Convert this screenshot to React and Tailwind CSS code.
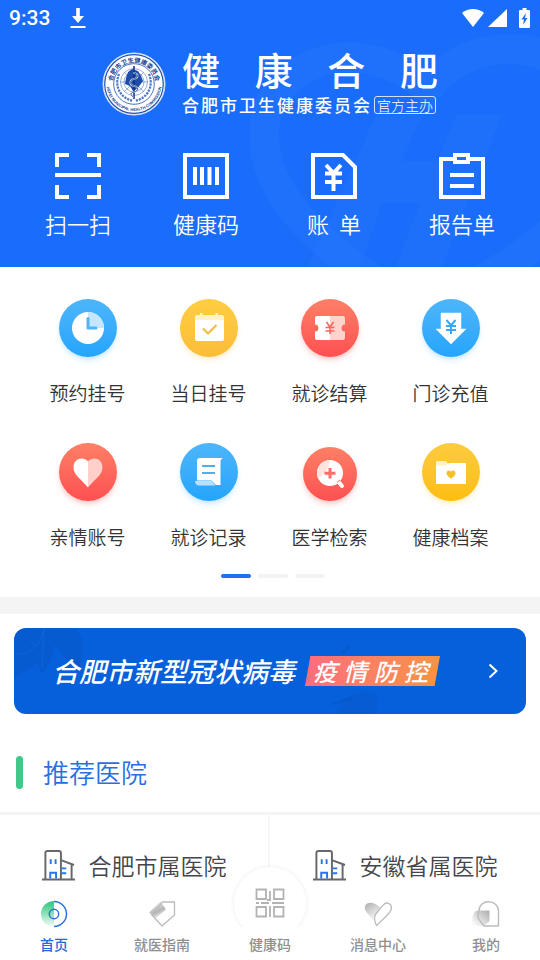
import { useState } from "react";

const quickActions = [
  { label: "扫一扫", icon: ScanIcon },
  { label: "健康码", icon: BarcodeIcon },
  { label: "账\u00a0\u00a0单", icon: BillIcon },
  { label: "报告单", icon: ReportIcon },
];

const services = [
  { label: "预约挂号", icon: ClockGlyph, tone: "blue" },
  { label: "当日挂号", icon: CalendarGlyph, tone: "yellow" },
  { label: "就诊结算", icon: TicketGlyph, tone: "red" },
  { label: "门诊充值", icon: TopUpGlyph, tone: "blue" },
  { label: "亲情账号", icon: HeartGlyph, tone: "red" },
  { label: "就诊记录", icon: RecordGlyph, tone: "blue" },
  { label: "医学检索", icon: SearchGlyph, tone: "red", small: true },
  { label: "健康档案", icon: FolderGlyph, tone: "gold" },
];

const tones = {
  blue: "from-[#4db5fb] to-[#23a5fc] shadow-[#23a5fc]/20",
  yellow: "from-[#ffcd42] to-[#fbbd38] shadow-[#fbbd38]/20",
  red: "from-[#fd7f66] to-[#fd4f51] shadow-[#fd4f51]/25",
  gold: "from-[#fdcb3e] to-[#fdbe0c] shadow-[#fdbe0c]/20",
};

const tabs = [
  { id: "home", label: "首页", icon: HomeTabIcon },
  { id: "guide", label: "就医指南", icon: GuideTabIcon },
  { id: "code", label: "健康码", icon: CodeTabIcon, raised: true },
  { id: "news", label: "消息中心", icon: NewsTabIcon },
  { id: "me", label: "我的", icon: MeTabIcon },
];

/* ---------- header icons ---------- */

function ScanIcon() {
  return (
    <svg className="size-[46px]" viewBox="0 0 46 46" fill="none" stroke="#fff" strokeWidth="4">
      <path d="M2 14V2h12M32 2h12v12M2 32v12h12M32 44h12V32" />
      <path d="M0 22h46" />
    </svg>
  );
}

function BarcodeIcon() {
  return (
    <svg className="size-[46px]" viewBox="0 0 46 46" fill="none" stroke="#fff" strokeWidth="4">
      <path d="M2 2h42v42H2z" />
      <path d="M12 14v18M19 14v18M26.500 14v18M34 14v18" />
    </svg>
  );
}

function BillIcon() {
  return (
    <svg className="size-[46px]" viewBox="0 0 46 46" fill="none" stroke="#fff" strokeWidth="4">
      <path d="M2 2h30l12 12v30H2z" />
      <path d="M15 12l7.500 8L30 12M14 20.500h17M14 29h17M22.500 20v18" />
    </svg>
  );
}

function ReportIcon() {
  return (
    <svg className="size-[46px]" viewBox="0 0 46 46" fill="none" stroke="#fff" strokeWidth="4">
      <path d="M15 6H2v38h42V6H30" />
      <path d="M16 2h13v7H16zM11 22h24M11 33h24" />
    </svg>
  );
}

/* ---------- service glyphs ---------- */

function ClockGlyph() {
  return (
    <svg className="size-[34px]" viewBox="0 0 34 34">
      <circle cx="17" cy="17" r="16" fill="#fff" />
      <path d="M17 1a16 16 0 0 1 16 16H17z" fill="#c4e6fe" />
      <path d="M17 7.500V17h8" fill="none" stroke="#4fb4f8" strokeWidth="3" strokeLinecap="round" strokeLinejoin="round" />
    </svg>
  );
}

function CalendarGlyph() {
  return (
    <svg className="size-[34px]" viewBox="0 0 34 34">
      <path d="M3 6a2 2 0 0 1 2-2h3V2h2.500v2h13V2H26v2h4a2 2 0 0 1 2 2v4H3z" fill="#fff2c4" />
      <path d="M3 9h29v19a2 2 0 0 1-2 2H5a2 2 0 0 1-2-2z" fill="#fff" />
      <path d="M11 17.500l5 5 8.500-8.500" fill="none" stroke="#f0bd45" strokeWidth="2.200" />
    </svg>
  );
}

function TicketGlyph() {
  return (
    <svg className="size-[34px]" viewBox="0 0 34 34">
      <path d="M4 5h13v24H4a2 2 0 0 1-2-2v-6.500a3.500 3.500 0 0 0 0-7V7a2 2 0 0 1 2-2z" fill="#fff" />
      <path d="M17 5h13a2 2 0 0 1 2 2v6.500a3.500 3.500 0 0 0 0 7V27a2 2 0 0 1-2 2H17z" fill="#fed3cd" />
      <path d="M13.500 11l3.500 5 3.500-5M12.500 16.500h9M12.500 20h9M17 16v7" fill="none" stroke="#f9655b" strokeWidth="1.600" />
    </svg>
  );
}

function TopUpGlyph() {
  return (
    <svg className="size-[34px]" viewBox="0 0 34 34">
      <path d="M7 2h20v16h5L17 33 2 18h5z" fill="#fff" stroke="#fff" strokeWidth="0.500" strokeLinejoin="round" />
      <path d="M12.500 9l4.500 5.500L21.500 9M12 15h10M12 19h10M17 14.500V23" fill="none" stroke="#36a8f5" strokeWidth="2" />
    </svg>
  );
}

function HeartGlyph() {
  return (
    <svg className="size-[34px]" viewBox="0 0 34 34">
      <path d="M17 6.500C12 1 2.500 3.500 2.500 12.500 2.500 20 11 25 17 32.500z" fill="#fff" />
      <path d="M17 6.500c5-5.500 14.500-3 14.500 6C31.500 20 23 25 17 32.500z" fill="#fed0c9" />
    </svg>
  );
}

function RecordGlyph() {
  return (
    <svg className="size-[34px]" viewBox="0 0 34 34">
      <path d="M8 3h23c-2 1-2.500 2-2.500 4v23H24l-4.500-4.500H5V6a3 3 0 0 1 3-3z" fill="#fff" />
      <path d="M3 26h16.500l4 4.500H7c-2.500 0-4-2-4-4.500z" fill="#b9e1fd" />
      <path d="M10 11h13M10 18h13" stroke="#4bb0ee" strokeWidth="2.200" />
    </svg>
  );
}

function SearchGlyph() {
  return (
    <svg className="size-[34px]" viewBox="0 0 34 34">
      <circle cx="17" cy="16" r="13" fill="#fff" />
      <path d="M17 3a13 13 0 0 0-12 18c6-3 11-8 12-18z" fill="#ffe3df" />
      <path d="M26.500 26l2.500 3" stroke="#fff" strokeWidth="4" strokeLinecap="round" />
      <path d="M24 25.500l3-2.500" stroke="#fc7068" strokeWidth="1" />
      <path d="M17 11v10.500M11.500 16.200h11" stroke="#fc6f69" strokeWidth="3" />
    </svg>
  );
}

function FolderGlyph() {
  return (
    <svg className="size-[34px]" viewBox="0 0 34 34">
      <path d="M2 6h10l3 4v5H2z" fill="#fff2c4" />
      <path d="M2 10.500h9.500L15 8h17v21H2z" fill="#fff" />
      <path d="M17 16.500c-1.600-2-4.500-1-4.500 1.400 0 2.800 2.800 4 4.500 5.900 1.700-1.900 4.500-3.100 4.500-5.900 0-2.400-2.900-3.400-4.500-1.400z" fill="#f5bf27" />
    </svg>
  );
}

/* ---------- tab bar icons ---------- */

function HomeTabIcon() {
  return (
    <svg className="size-7" viewBox="0 0 28 28" fill="none">
      <defs>
        <linearGradient id="tab-home" x1="0" y1="0" x2="0" y2="1">
          <stop offset="0.100" stopColor="#3fca88" />
          <stop offset="1" stopColor="#3fca88" stopOpacity="0.050" />
        </linearGradient>
      </defs>
      <path d="M14 1a13 13 0 0 0 0 26z" fill="url(#tab-home)" />
      <path d="M14 1.500a12.500 12.500 0 0 1 0 25" stroke="#2a72dc" strokeWidth="1.500" />
      <circle cx="14" cy="14" r="4.700" stroke="#2a72dc" strokeWidth="1.500" />
    </svg>
  );
}

function GuideTabIcon() {
  return (
    <svg className="size-7" viewBox="0 0 28 28" fill="none">
      <defs>
        <linearGradient id="tab-guide" x1="0.200" y1="0" x2="0.700" y2="1">
          <stop offset="0" stopColor="#b5b5b5" stopOpacity="0.100" />
          <stop offset="0.600" stopColor="#b5b5b5" />
          <stop offset="1" stopColor="#b5b5b5" stopOpacity="0.100" />
        </linearGradient>
      </defs>
      <path d="M1 12.500L12.500 1.500 18 9.500 8 18z" fill="url(#tab-guide)" />
      <path d="M3.500 14.500L14.500 2H26.500v13L14 26z" stroke="#bcbcbc" strokeWidth="1.300" strokeLinejoin="round" />
    </svg>
  );
}

function CodeTabIcon() {
  return (
    <svg className="size-[30px]" viewBox="0 0 30 30" fill="none" stroke="#b3b3b3" strokeWidth="1.800">
      <path d="M1.500 1.500h9.500v9.500H1.500zM19 1.500h9.500v9.500H19zM1.500 19h9.500v9.500H1.500zM19 19h9.500v9.500H19z" />
      <path d="M15 3v9h-3M1 15h3M6 15h8M17 15h12M15 18v11" />
    </svg>
  );
}

function NewsTabIcon() {
  return (
    <svg className="size-7" viewBox="0 0 30 28" fill="none">
      <defs>
        <linearGradient id="tab-news" x1="0" y1="0" x2="0.600" y2="1">
          <stop offset="0.100" stopColor="#b5b5b5" />
          <stop offset="1" stopColor="#b5b5b5" stopOpacity="0.050" />
        </linearGradient>
      </defs>
      <path d="M8 2C3 1 0 5 1 9c1 3.500 4 5 9 12l2-6 6-8c-3-2-6-4.500-10-5z" fill="url(#tab-news)" />
      <path d="M13.500 26.500c-3-6-3.500-9.500-.5-13L20.500 4.500c3.500-4.500 10.500-1.500 8.500 5-1.500 5-8.500 9-15.500 17z" stroke="#bcbcbc" strokeWidth="1.400" strokeLinejoin="round" />
    </svg>
  );
}

function MeTabIcon() {
  return (
    <svg className="size-7" viewBox="0 0 28 28" fill="none">
      <defs>
        <linearGradient id="tab-me" x1="1" y1="0" x2="0" y2="1">
          <stop offset="0.100" stopColor="#b5b5b5" />
          <stop offset="0.900" stopColor="#b5b5b5" stopOpacity="0.050" />
        </linearGradient>
      </defs>
      <path d="M6 10.500h11.500V21L12 26H0c0-9 1-15.500 6-15.500z" fill="url(#tab-me)" />
      <path d="M12 26h14.500V11c0-12-19.500-12.500-19.500 0-3 6 0 9 5 15z" stroke="#bcbcbc" strokeWidth="1.400" strokeLinejoin="round" />
    </svg>
  );
}

/* ---------- larger drawings ---------- */

function Emblem() {
  return (
    <svg className="size-16 shrink-0" viewBox="0 0 64 64" fill="none">
      <defs>
        <path id="ring-top" d="M10.500 32a21.500 21.500 0 0 1 43 0" />
        <path id="ring-bottom" d="M4.500 29a27.600 27.600 0 1 0 55 0" />
      </defs>
      <circle cx="32" cy="32" r="31" fill="#fff" stroke="#cfe0fb" />
      <circle cx="32" cy="32" r="29.300" stroke="#1c50ae" strokeWidth="1.200" />
      <circle cx="32" cy="32" r="20.300" stroke="#1c50ae" strokeWidth="0.800" />
      <text fontSize="6.200" fontWeight="700" fill="#153f97" fontFamily="Noto Sans CJK SC, sans-serif" textAnchor="middle">
        <textPath href="#ring-top" startOffset="50%">合肥市卫生健康委员会</textPath>
      </text>
      <text fontSize="4" fontWeight="700" fill="#153f97" fontFamily="Liberation Sans, sans-serif" textAnchor="middle">
        <textPath href="#ring-bottom" startOffset="50%">HEFEI MUNICIPAL HEALTH COMMISSION</textPath>
      </text>
      <g stroke="#6c8fce" strokeWidth="0.700">
        <circle cx="32" cy="30" r="6" />
        <circle cx="32" cy="30" r="10" />
        <circle cx="32" cy="30" r="13.500" />
        <path d="M18 30h28M22 20l20 20M42 20L22 40" />
      </g>
      <path d="M17 22c-5 12 1 24 14 27M47 22c5 12-1 24-14 27" stroke="#4a76c6" strokeWidth="2.200" strokeDasharray="2.200 1" />
      <path d="M26 20l4-3 6 2 3 5 2 5-3 4-3 4-4 2-3-5-5-2 1-6z" fill="#1b4ca8" />
      <path d="M32 14v33" stroke="#0f3688" strokeWidth="1.600" />
      <path d="M31 21c6 0 6 5 1 6s-5 6 0 7 5 5 0 6-3 4 0 5" stroke="#fff" strokeWidth="1.600" />
      <path d="M31 21c6 0 6 5 1 6s-5 6 0 7 5 5 0 6-3 4 0 5" stroke="#0f3688" strokeWidth="0.900" />
    </svg>
  );
}

function HeaderPattern() {
  return (
    <svg className="pointer-events-none absolute right-0 bottom-0 h-[232px] w-[290px]" viewBox="0 0 290 232" fill="none">
      <path
        d="M150 262C50 200 14 150 14 98 14 30 108-8 178 54 218-2 310 0 350 66c20 90-60 150-150 196"
        stroke="#3f8cff"
        strokeOpacity="0.150"
        strokeWidth="30"
      />
      <path d="M126 80h46l-20 46h36l18-46h46l-60 152h-46l24-64h-38l-22 64H58z" fill="#3f8cff" fillOpacity="0.110" />
    </svg>
  );
}

function HospitalIcon() {
  return (
    <svg className="h-8 w-[33px] shrink-0" viewBox="0 0 34 32" fill="none" strokeWidth="2">
      <path d="M0 31h34M3.500 31V3.500a2 2 0 0 1 2-2h12a2 2 0 0 1 2 2V31M19.500 11L33 16M30.500 15v16" stroke="#66676b" />
      <path d="M9 10v5M14 10v5M8.500 30v-6h6v6M20 19.500h5M20 24.500h5" stroke="#2575ed" />
    </svg>
  );
}

function StatusBar() {
  return (
    <div className="flex h-9 items-center justify-between pr-2.5 pl-[9px]">
      <div className="flex items-center gap-5">
        <span className="font-[Roboto] text-[21px] leading-6 font-medium">9:33</span>
        <svg className="h-[22px] w-4" viewBox="0 0 16 22" fill="#fff">
          <path d="M6.200 1h3.600v8H14l-6 7-6-7h4.200zM.5 19h15v2H.5z" />
        </svg>
      </div>
      <div className="flex items-center gap-1">
        <svg className="h-5 w-[22px]" viewBox="0 0 22 20" fill="#fff">
          <path d="M11 19L0 5c6-5.300 16-5.300 22 0z" />
        </svg>
        <svg className="h-5 w-[19px]" viewBox="0 0 19 20" fill="#fff">
          <path d="M19 1v18H0z" />
        </svg>
        <svg className="ml-2 h-5 w-[11px]" viewBox="0 0 11 20">
          <path d="M3.500 0h4v2H10a1 1 0 0 1 1 1v16a1 1 0 0 1-1 1H1a1 1 0 0 1-1-1V3a1 1 0 0 1 1-1h2.500z" fill="#fff" />
          <path d="M7 5l-4.500 6.500H5L4 17l4.500-7H6z" fill="#1a6dfb" />
        </svg>
      </div>
    </div>
  );
}

function BannerPattern() {
  return (
    <svg className="absolute inset-0 size-full" viewBox="0 0 512 86" preserveAspectRatio="none" fill="none">
      <path d="M0 0h62c10 12 8 28 3 40-14-6-20-18-24-24-2 12-4 20-14 30-2-8-4-12-5-10L0 50z" fill="#0b50ba" fillOpacity="0.300" />
      <path d="M4 26c10 0 22-6 26-26M14 10l8 8M30 0l-2 40" stroke="#2d78e4" strokeOpacity="0.300" />
      <path d="M322 86c6-14 14-20 28-22 14-2 18 10 10 22z" fill="#0b4fbc" fillOpacity="0.250" />
      <path d="M318 76l20-6M336 18l-8 8" stroke="#0a469f" strokeOpacity="0.200" strokeWidth="3" />
    </svg>
  );
}

function App() {
  const [activeTab, setActiveTab] = useState("home");

  return (
    <div className="flex min-h-screen flex-col bg-white font-['Noto_Sans_CJK_SC',sans-serif] font-[350] text-[#333]">
      <header className="relative bg-[#1a6dfb] pb-7 text-white">
        <HeaderPattern />
        <div className="relative">
          <StatusBar />

          <div className="flex items-center justify-center gap-4 pt-[15px]">
            <Emblem />
            <div className="w-[256px]">
              <h1 className="text-[38px] leading-9 font-medium [text-align-last:justify]">健 康 合 肥</h1>
              <div className="mt-1.5 flex items-center justify-between pr-0.5">
                <p className="w-[188px] text-[17px] leading-6 font-medium [text-align-last:justify]">合肥市卫生健康委员会</p>
                <span className="rounded-[3px] border border-white/80 px-0.5 text-[14px] leading-4 font-light">官方主办</span>
              </div>
            </div>
          </div>

          <div className="grid grid-cols-4 px-3.5 pt-9">
            {quickActions.map(({ label, icon: Icon }) => (
              <button key={label} type="button" className="flex flex-col items-center gap-2">
                <Icon />
                <span className="text-[22px] leading-8">{label}</span>
              </button>
            ))}
          </div>
        </div>
      </header>

      <section className="pt-8 pr-[29px] pb-[19px] pl-[27px]">
        <div className="grid grid-cols-4 gap-y-[34px]">
          {services.map(({ label, icon: Icon, tone, small }) => (
            <button key={label} type="button" className="flex flex-col items-center gap-5">
              <span className="flex size-[58px] items-end justify-center">
                <span
                  className={`flex items-center justify-center rounded-full bg-linear-to-b shadow-md ${tones[tone]} ${
                    small ? "size-[54px]" : "size-[58px]"
                  }`}
                >
                  <Icon />
                </span>
              </span>
              <span className="text-[19px] leading-8 whitespace-nowrap">{label}</span>
            </button>
          ))}
        </div>
        {/* pager */}
        <div className="mt-[21px] flex justify-center gap-[7px] pl-2">
          <span className="h-1 w-[30px] rounded-full bg-[#2270ee]" />
          <span className="h-1 w-[30px] rounded-full bg-[#f3f3f3]" />
          <span className="h-1 w-[30px] rounded-full bg-[#f3f3f3]" />
        </div>
      </section>

      <div className="h-[17px] bg-[#f4f4f4]" />

      <div className="px-3.5 pt-3.5">
        <a href="#covid" className="relative flex h-[86px] items-center overflow-hidden rounded-xl bg-[#0660db] pr-7 pl-[38px] text-white">
          <BannerPattern />
          <span className="relative text-[27px] leading-9 font-medium whitespace-nowrap italic">合肥市新型冠状病毒</span>
          <span className="relative ml-2.5 w-[135px] bg-linear-to-r from-[#fd6c7c] to-[#f5943f] pr-3 pl-2 text-[24px] leading-[30px] font-medium italic [clip-path:polygon(4%_0,100%_0,96%_100%,0_100%)] [text-align-last:justify]">
            疫情防控
          </span>
          <svg className="relative ml-auto h-4 w-2.5" viewBox="0 0 10 16" fill="none" stroke="#fff" strokeWidth="2">
            <path d="M1.500 1.500L8.500 8l-7 6.500" />
          </svg>
        </a>
      </div>

      <section>
        <h2 className="mt-10 flex items-center gap-5 px-4 text-[26px] leading-9 text-[#2a6fdf]">
          <span className="h-[33px] w-[7px] rounded-full bg-[#3ec988]" />
          推荐医院
        </h2>
        <div className="mt-[22px] grid grid-cols-2 divide-x-2 divide-[#f7f7f7] border-t-3 border-[#f5f5f5]">
          {["合肥市属医院", "安徽省属医院"].map((name) => (
            <a key={name} href="#hospitals" className="flex items-center justify-center gap-3.5 pt-8 pb-1">
              <HospitalIcon />
              <span className="text-[23px] leading-9 whitespace-nowrap text-[#44464c]">{name}</span>
            </a>
          ))}
        </div>
      </section>

      <nav className="mt-auto grid grid-cols-5 items-end bg-white pb-[5px]">
        {tabs.map(({ id, label, icon: Icon, raised }) => (
          <button
            key={id}
            type="button"
            onClick={() => setActiveTab(id)}
            className={`flex flex-col items-center text-[14px] leading-[22px] font-medium ${
              activeTab === id ? "text-[#2268dc]" : "text-[#8f8f8f]"
            }`}
          >
            {raised ? (
              <span className="relative -mt-6 flex size-[72px] items-center justify-center rounded-full bg-white [clip-path:inset(-8px_-8px_12px_-8px)] shadow-[0_0_5px_rgba(0,0,0,0.08)]">
                <Icon />
              </span>
            ) : (
              <span className="mb-[5px]">
                <Icon />
              </span>
            )}
            <span className={raised ? "-mt-1.5" : ""}>{label}</span>
          </button>
        ))}
      </nav>
    </div>
  );
}

export default App;
